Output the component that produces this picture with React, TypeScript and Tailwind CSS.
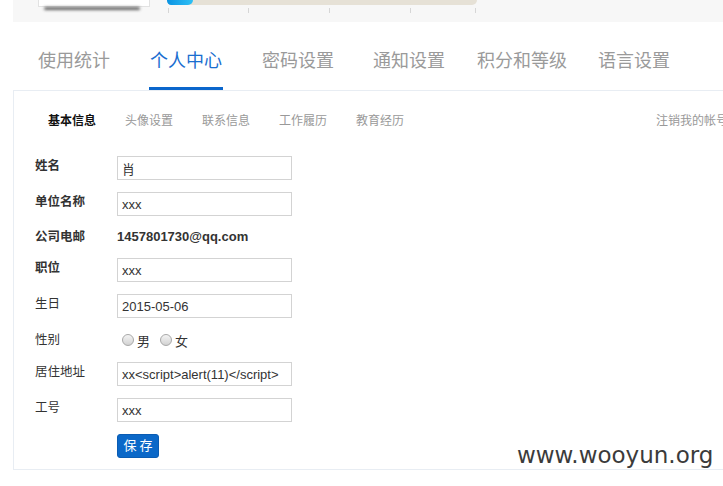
import React from "react";

const font = "font-['Liberation_Sans','Noto_Sans_CJK_SC',sans-serif]";

function Field({ value }: { value: string }) {
  return (
    <input
      readOnly
      value={value}
      className="w-[175px] h-[24px] border border-[#d3d3d3] bg-white pl-[4px] text-[13px] text-[#333] outline-none font-['Liberation_Sans','Noto_Sans_CJK_SC',sans-serif]"
    />
  );
}

function Row({
  label,
  bold,
  children,
  labelPad = "pt-[1px]",
}: {
  label: string;
  bold?: boolean;
  children: React.ReactNode;
  labelPad?: string;
}) {
  return (
    <div className="flex items-start">
      <div
        className={`w-[82px] text-[12.5px] leading-[18px] text-[#333] ${labelPad} ${
          bold ? "font-bold" : ""
        }`}
      >
        {label}
      </div>
      {children}
    </div>
  );
}

function Radio({ label }: { label: string }) {
  return (
    <div className="flex items-center">
      <span className="w-[12px] h-[12px] rounded-full border border-[#a8a8a8] bg-gradient-to-b from-[#f4f4f4] to-[#d2d2d2]" />
      <span className="ml-[3px] text-[13px] leading-[20px] text-[#333] pt-[3px]">{label}</span>
    </div>
  );
}

export default function App() {
  const tabs = [
    { t: "使用统计", ml: "ml-[38px]" },
    { t: "个人中心", ml: "ml-[40px]", active: true },
    { t: "密码设置", ml: "ml-[40px]" },
    { t: "通知设置", ml: "ml-[39px]" },
    { t: "积分和等级", ml: "ml-[32px]" },
    { t: "语言设置", ml: "ml-[31px]" },
  ];
  const subtabs = ["头像设置", "联系信息", "工作履历", "教育经历"];
  return (
    <div className={`relative w-[723px] h-[486px] overflow-hidden bg-white ${font}`}>
      {/* top header strip */}
      <div className="ml-[13px] h-[22px] bg-[#f7f7f7] flex items-start overflow-hidden">
        <div className="ml-[25px] flex flex-col">
          <div className="w-[112px] h-[7px] bg-white border-x border-b border-[#e2e2e2]" />
          <div className="ml-[6px] w-[96px] h-[3px] mt-[0px] rounded-full bg-[#3a3a3a] blur-[1.5px] opacity-80" />
        </div>
        <div className="ml-[17px] flex flex-col">
          <div className="w-[310px] h-[5px] bg-[#e6e1d6] rounded-b-[5px] flex">
            <div className="w-[26px] h-[5px] rounded-bl-[5px] rounded-br-[6px] bg-gradient-to-r from-[#0a93e2] to-[#2ec0f5]" />
          </div>
          <div className="mt-[3px] h-[5px] flex">
            <div className="ml-[1px] w-[1px] h-[5px] bg-[#d6d6d6]" />
            <div className="ml-[79px] w-[1px] h-[5px] bg-[#d6d6d6]" />
            <div className="ml-[80px] w-[1px] h-[5px] bg-[#d6d6d6]" />
            <div className="ml-[80px] w-[1px] h-[5px] bg-[#d6d6d6]" />
            <div className="ml-[64px] w-[1px] h-[5px] bg-[#d6d6d6]" />
          </div>
        </div>
        <div className="ml-[58px] -mt-[14px] text-[13px] leading-[16px] text-[#333] whitespace-nowrap">
          升级还需 300 积分
        </div>
        <div className="ml-[70px] -mt-[14px] text-[13px] leading-[16px] text-[#0066cc] whitespace-nowrap">
          如何
        </div>
      </div>

      {/* main tabs */}
      <div className="flex items-end h-[68px]">
        {tabs.map((tab) => (
          <div key={tab.t} className={`${tab.ml} flex flex-col items-center`}>
            <div
              className={`text-[18px] leading-[24px] whitespace-nowrap ${
                tab.active ? "text-[#1a6ed0]" : "text-[#9a9a9a]"
              }`}
            >
              {tab.t}
            </div>
            <div
              className={`mt-[14px] h-[3px] w-[calc(100%+2px)] ${
                tab.active ? "bg-[#0a66cc]" : "bg-transparent"
              }`}
            />
          </div>
        ))}
      </div>

      {/* panel */}
      <div className="ml-[13px] w-[730px] h-[380px] border border-[#e8edf3]">
        <div className="flex items-center pl-[34px] pr-[14px] pt-[21px] text-[12px] leading-[18px]">
          <div className="font-bold text-[#111]">基本信息</div>
          {subtabs.map((s) => (
            <div key={s} className="ml-[29px] text-[#999]">
              {s}
            </div>
          ))}
          <div className="ml-auto text-[#999] whitespace-nowrap">注销我的帐号</div>
        </div>

        <div className="mt-[26px] pl-[21px] flex flex-col gap-[12px]">
          <Row label="姓名" bold>
            <Field value="肖" />
          </Row>
          <Row label="单位名称" bold>
            <Field value="xxx" />
          </Row>
          <Row label="公司电邮" bold labelPad="pt-0">
            <div className="text-[13px] leading-[18px] font-bold text-[#333]">
              1457801730@qq.com
            </div>
          </Row>
          <Row label="职位" bold>
            <Field value="xxx" />
          </Row>
          <Row label="生日">
            <Field value="2015-05-06" />
          </Row>
          <Row label="性别">
            <div className="h-[20px] flex items-center pl-[5px] gap-[10px]">
              <Radio label="男" />
              <Radio label="女" />
            </div>
          </Row>
          <Row label="居住地址">
            <Field value="xx<script>alert(11)</script>" />
          </Row>
          <Row label="工号">
            <Field value="xxx" />
          </Row>
          <div className="flex">
            <div className="w-[82px]" />
            <button className="w-[42px] h-[24px] rounded-[3px] bg-[#0b68c8] border border-[#0a5cb3] text-white text-[13px] tracking-[3px] pl-[3px] leading-[22px]">
              保存
            </button>
          </div>
        </div>
      </div>

      {/* watermark */}
      <div className="absolute left-[517px] top-[444px] text-[23px] leading-none text-[#3b3b3b] font-['DejaVu_Sans',sans-serif] whitespace-nowrap">
        www.wooyun.org
      </div>
    </div>
  );
}
